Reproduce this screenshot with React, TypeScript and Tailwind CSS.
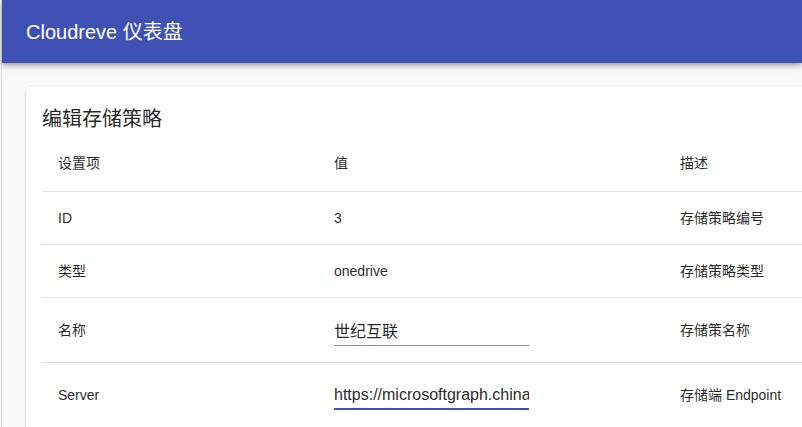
import React from "react";

const font = { fontFamily: '"Liberation Sans", Arial, "Noto Sans CJK SC", sans-serif' };

function Row({ a, b, c, last }: { a: string; b: React.ReactNode; c: string; last?: boolean }) {
  return (
    <div className={`grid grid-cols-[276px_346px_1fr] items-center ${last ? "" : "border-b border-[#e0e0e0]"} ${typeof b === "string" ? "h-[53px]" : "h-[65px]"}`}>
      <div className="pl-4">{a}</div>
      <div className="pl-4">{b}</div>
      <div className="pl-4">{c}</div>
    </div>
  );
}

function Field({ value, focused }: { value: string; focused?: boolean }) {
  return (
    <div className="relative w-[195px] h-[32px]">
      <input
        readOnly
        defaultValue={value}
        className="block w-full pt-[6px] pb-[7px] h-[32px] text-[16px] leading-[19px] text-[rgba(0,0,0,0.87)] bg-transparent outline-none border-0 p-0"
        style={font}
      />
      {focused ? (
        <div className="absolute left-0 right-0 bottom-[1px] h-[2px] bg-[#3f51b5]" />
      ) : (
        <div className="absolute left-0 right-0 bottom-0 h-[1px] bg-[#8c8c8c]" />
      )}
    </div>
  );
}

export default function App() {
  return (
    <div className="w-full h-[427px] overflow-hidden flex bg-[#fafafa]" style={font}>
      <div className="w-[2px] shrink-0 bg-[#f2f2f2] border-r border-[#e0e0e0]" />
      <div className="flex-1 flex flex-col min-w-0">
        <div className="relative z-10 h-[63px] shrink-0 bg-[#3f51b5] flex items-center pl-6 shadow-[0_2px_4px_-1px_rgba(0,0,0,0.2),0_4px_5px_0_rgba(0,0,0,0.14),0_1px_10px_0_rgba(0,0,0,0.12)]">
          <span className="text-white text-[20px] leading-none">Cloudreve 仪表盘</span>
        </div>
        <div className="flex-1 pl-[24px] pt-6">
          <div className="w-[1000px] bg-white rounded-[4px] shadow-[0_1px_3px_0_rgba(0,0,0,0.2),0_1px_1px_0_rgba(0,0,0,0.14),0_2px_1px_-1px_rgba(0,0,0,0.12)] px-4 pt-4 pb-12">
            <div className="text-[20px] leading-[32px] text-[rgba(0,0,0,0.87)]">编辑存储策略</div>
            <div className="text-[14px] text-[rgba(0,0,0,0.87)]">
              <div className="grid grid-cols-[276px_346px_1fr] items-center h-[57px] border-b border-[#e0e0e0]">
                <div className="pl-4">设置项</div>
                <div className="pl-4">值</div>
                <div className="pl-4">描述</div>
              </div>
              <Row a="ID" b="3" c="存储策略编号" />
              <Row a="类型" b="onedrive" c="存储策略类型" />
              <Row a="名称" b={<Field value="世纪互联" />} c="存储策名称" />
              <Row a="Server" b={<Field value="https://microsoftgraph.chinacloudapi.cn" focused />} c="存储端 Endpoint" />
            </div>
          </div>
        </div>
      </div>
    </div>
  );
}
